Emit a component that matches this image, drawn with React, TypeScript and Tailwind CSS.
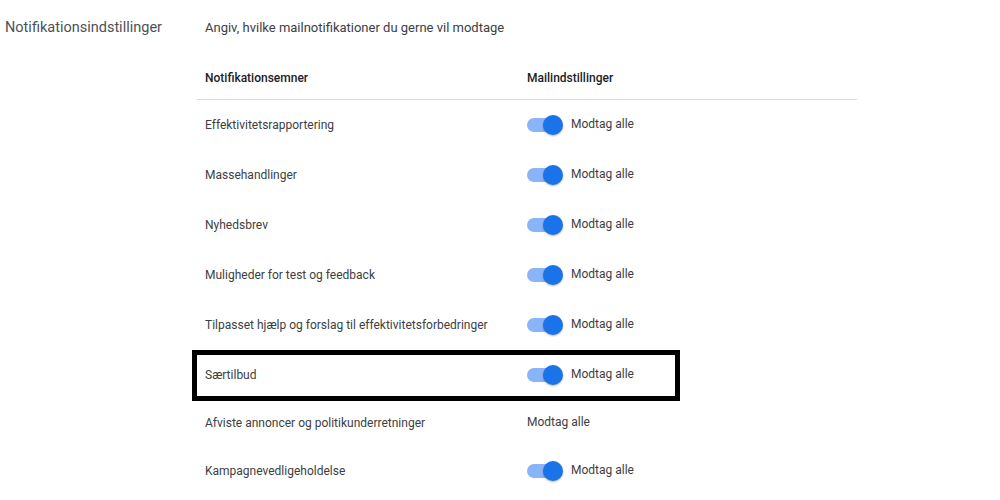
import React from "react";

const rows: { label: string; toggle: boolean; boxed?: boolean }[] = [
  { label: "Effektivitetsrapportering", toggle: true },
  { label: "Massehandlinger", toggle: true },
  { label: "Nyhedsbrev", toggle: true },
  { label: "Muligheder for test og feedback", toggle: true },
  { label: "Tilpasset hjælp og forslag til effektivitetsforbedringer", toggle: true },
  { label: "Særtilbud", toggle: true, boxed: true },
  { label: "Afviste annoncer og politikunderretninger", toggle: false },
  { label: "Kampagnevedligeholdelse", toggle: true },
];

function Toggle() {
  return (
    <div className="relative w-[36px] h-[20px] flex items-center shrink-0">
      <div className="w-[30px] h-[14px] rounded-full bg-[#8ab4f8]" />
      <div className="absolute right-0 top-0 w-[20px] h-[20px] rounded-full bg-[#1a73e8] shadow-[0_1px_2px_rgba(0,0,0,0.3)]" />
    </div>
  );
}

export default function App() {
  return (
    <div
      className="w-[1000px] h-[500px] bg-white overflow-hidden flex"
      style={{ fontFamily: "Roboto, 'Liberation Sans', sans-serif" }}
    >
      <div className="w-[197px] shrink-0 pl-[5px] pt-[18px] text-[14.5px] leading-[20px] text-[#4d5156]">
        Notifikationsindstillinger
      </div>
      <div className="w-[660px] shrink-0 flex flex-col">
        <div className="pt-[18px] pl-[8px] text-[13px] leading-[20px] text-[#3c4043]">
          Angiv, hvilke mailnotifikationer du gerne vil modtage
        </div>
        <div className="mt-[18px] h-[44px] flex items-center border-b border-[#dadce0] text-[12px] font-medium text-[#202124]">
          <div className="w-[322px] pl-[8px]">Notifikationsemner</div>
          <div className="pl-[8px]">Mailindstillinger</div>
        </div>
        {rows.map((r) => (
          <div
            key={r.label}
            className={`relative flex items-center text-[12px] text-[#3c4043] ${r.toggle ? "h-[50px]" : "h-[46px]"}`}
          >
            <div className="w-[322px] pl-[8px]">{r.label}</div>
            <div className="pl-[8px] flex items-center gap-[8px]">
              {r.toggle && <Toggle />}
              <span className="text-[12px] leading-[18px] -mt-[2px]">Modtag alle</span>
            </div>
            {r.boxed && (
              <div className="absolute left-[-5px] top-0 w-[488px] h-[51px] border-[5px] border-black pointer-events-none" />
            )}
          </div>
        ))}
      </div>
    </div>
  );
}
